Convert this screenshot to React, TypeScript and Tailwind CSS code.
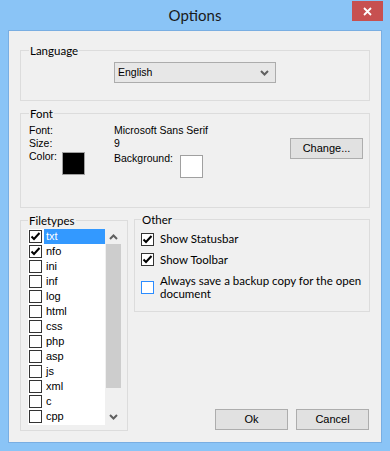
import React from "react";

const ui = { fontFamily: '"Liberation Sans", Arial, sans-serif' };
const seg = { fontFamily: 'Lato, "Noto Sans", sans-serif' };

const fileTypes = [
  { name: "txt", checked: true },
  { name: "nfo", checked: true },
  { name: "ini", checked: false },
  { name: "inf", checked: false },
  { name: "log", checked: false },
  { name: "html", checked: false },
  { name: "css", checked: false },
  { name: "php", checked: false },
  { name: "asp", checked: false },
  { name: "js", checked: false },
  { name: "xml", checked: false },
  { name: "c", checked: false },
  { name: "cpp", checked: false },
];

function Check({ checked }: { checked?: boolean }) {
  return (
    <span className="flex h-[13px] w-[13px] shrink-0 items-center justify-center border border-[#333333] bg-white">
      {checked && (
        <svg width="11" height="11" viewBox="0 0 11 11">
          <path d="M1.5 5.5 L4 8 L9.5 2" fill="none" stroke="#000" strokeWidth="2" />
        </svg>
      )}
    </span>
  );
}

function FocusCheck() {
  return <span className="block h-[13px] w-[13px] shrink-0 border border-solid border-[#2b8cff] bg-white" />;
}

function Chevron({ up }: { up?: boolean }) {
  return (
    <svg width="9" height="6" viewBox="0 0 9 6">
      <path
        d={up ? "M1 5 L4.5 1.5 L8 5" : "M1 1 L4.5 4.5 L8 1"}
        fill="none"
        stroke="#606060"
        strokeWidth="2"
      />
    </svg>
  );
}

function Button({ children, w }: { children: React.ReactNode; w: string }) {
  return (
    <button
      className={`${w} h-[21px] border border-[#adadad] bg-[#e1e1e1] text-[11px] text-black`}
      style={ui}
    >
      {children}
    </button>
  );
}

export default function App() {
  return (
    <div className="flex h-[451px] w-[390px] flex-col bg-[#8ac4f6]">
      {/* title bar */}
      <div className="flex h-[30px] shrink-0 items-start">
        <div className="flex h-[30px] flex-1 items-center justify-center pl-[38px] text-[15px] text-[#1a1a1a]" style={seg}>
          Options
        </div>
        <div className="mr-[7px] mt-[1px] flex h-[20px] w-[31px] items-center justify-center bg-[#c75050]">
          <svg width="9" height="9" viewBox="0 0 9 9">
            <path d="M1 1 L8 8 M8 1 L1 8" stroke="#fff" strokeWidth="1.8" />
          </svg>
        </div>
      </div>

      {/* client */}
      <div className="mx-[8px] flex h-[413px] shrink-0 flex-col border border-[#79aee2] bg-[#f0f0f0] px-[11px] pt-[13px]">
        <fieldset className="h-[57px] shrink-0 border border-[#dcdcdc] px-[8px]">
          <legend className="px-[1px] text-[11.5px] leading-[13px] text-black" style={seg}>
            Language
          </legend>
          <div className="flex justify-center pt-[5px]">
            <div className="flex h-[21px] w-[162px] items-center justify-between border border-[#acacac] bg-[#e7e7e7] pl-[3px] pr-[6px] text-[10.5px]" style={ui}>
              <span>English</span>
              <Chevron />
            </div>
          </div>
        </fieldset>

        <fieldset className="mt-[6px] h-[101px] shrink-0 border border-[#dcdcdc] pl-[8px] pr-[6px]">
          <legend className="px-[1px] text-[11.5px] leading-[13px] text-black" style={seg}>
            Font
          </legend>
          <div className="flex items-start justify-between pt-[4px] text-[10.5px] leading-[13px]" style={ui}>
            <div className="flex flex-col">
              <div className="flex">
                <span className="w-[85px]">Font:</span>
                <span>Microsoft Sans Serif</span>
              </div>
              <div className="flex">
                <span className="w-[85px]">Size:</span>
                <span>9</span>
              </div>
              <div className="flex">
                <div className="flex w-[85px]">
                  <span className="w-[33px]">Color:</span>
                  <span className="mt-[2px] h-[23px] w-[23px] border border-[#a0a0a0] bg-black" />
                </div>
                <span className="mt-[2px] w-[66px]">Background:</span>
                <span className="mt-[5px] h-[23px] w-[23px] border border-[#a0a0a0] bg-white" />
              </div>
            </div>
            <div className="pt-[14px]">
              <Button w="w-[73px]">Change...</Button>
            </div>
          </div>
        </fieldset>

        <div className="mt-[6px] flex h-[217px] shrink-0 gap-[6px]">
          <fieldset className="h-[217px] w-[108px] shrink-0 border border-[#dcdcdc] pl-[7px]">
            <legend className="px-[1px] text-[11.5px] leading-[13px] text-black" style={seg}>
              Filetypes
            </legend>
            <div className="mt-[2px] flex h-[196px]">
              <div className="flex w-[77px] flex-col bg-white text-[11px]" style={ui}>
                {fileTypes.map((f, i) => (
                  <div key={f.name} className="flex h-[15px] items-center">
                    <span className="pl-[1px] pr-[2px]">
                      <Check checked={f.checked} />
                    </span>
                    <span
                      className={`flex h-[15px] flex-1 items-center pl-[2px] ${
                        i === 0 ? "bg-[#3399ff] text-white" : "text-black"
                      }`}
                    >
                      {f.name}
                    </span>
                  </div>
                ))}
              </div>
              <div className="flex w-[16px] flex-col items-center">
                <div className="flex h-[15px] items-center">
                  <Chevron up />
                </div>
                <div className="h-[144px] w-[15px] bg-[#cdcdcd]" />
                <div className="flex flex-1 items-end pb-[5px]">
                  <Chevron />
                </div>
              </div>
            </div>
          </fieldset>

          <div className="-mt-[1px] flex flex-1 flex-col">
            <fieldset className="h-[99px] border border-[#dcdcdc] pl-[6px]">
              <legend className="px-[1px] text-[11.5px] leading-[13px] text-black" style={seg}>
                Other
              </legend>
              <div className="flex flex-col pt-[2px] text-[11.5px] text-black" style={seg}>
                <label className="flex h-[22px] items-center gap-[6px]">
                  <Check checked />
                  <span>Show Statusbar</span>
                </label>
                <label className="flex h-[19px] items-center gap-[6px]">
                  <Check checked />
                  <span>Show Toolbar</span>
                </label>
                <label className="mt-[5px] flex items-center gap-[6px]">
                  <FocusCheck />
                  <span className="leading-[13px]">
                    Always save a backup copy for the open
                    <br />
                    document
                  </span>
                </label>
              </div>
            </fieldset>

            <div className="mt-auto mb-[1px] flex justify-end gap-[8px] pr-[1px]">
              <Button w="w-[73px]">Ok</Button>
              <Button w="w-[73px]">Cancel</Button>
            </div>
          </div>
        </div>
      </div>
    </div>
  );
}
